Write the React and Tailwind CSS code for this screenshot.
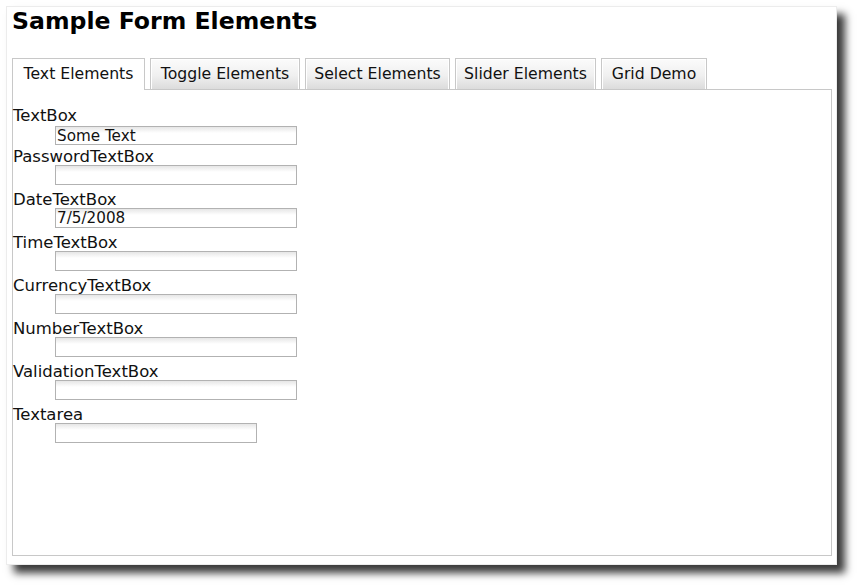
const tabs = [
  { label: "Text Elements", w: "w-[133px]", active: true },
  { label: "Toggle Elements", w: "w-[150px]" },
  { label: "Select Elements", w: "w-[145px]" },
  { label: "Slider Elements", w: "w-[141px]" },
  { label: "Grid Demo", w: "w-[106px]" },
];

const fields = [
  { label: "TextBox", value: "Some Text" },
  { label: "PasswordTextBox", type: "password" },
  { label: "DateTextBox", value: "7/5/2008" },
  { label: "TimeTextBox" },
  { label: "CurrencyTextBox" },
  { label: "NumberTextBox" },
  { label: "ValidationTextBox" },
  { label: "Textarea", narrow: true },
];

function Field({ f, first }) {
  return (
    <div className={first ? "mb-[4px]" : "mb-[7px]"}>
      <div className="text-[16.5px] leading-[16px] text-[#111]">{f.label}</div>
      <input
        type={f.type || "text"}
        defaultValue={f.value || ""}
        className={`ml-[42px] block border border-[#b2b2b2] bg-[linear-gradient(to_bottom,#e6e6e6,#ffffff_6px)] px-[1px] text-[15.2px] leading-[18px] text-[#111] outline-none ${
          f.narrow ? "w-[202px]" : "w-[242px]"
        } ${first ? "mt-[2px] h-[19px]" : "h-[20px]"}`}
      />
    </div>
  );
}

export default function App() {
  return (
    <div className="w-[860px] h-[588px] bg-white pt-[6px] pl-[6px] font-['DejaVu_Sans',sans-serif]">
      <div className="w-[831px] h-[559px] bg-white border border-[#ececec] shadow-[8px_8px_8px_rgba(0,0,0,0.78)]">
        <h1 className="pl-[5px] text-[23.6px] leading-[28px] font-bold text-black">
          Sample Form Elements
        </h1>

        <div className="ml-[5px] mt-[23px] w-[820px]">
          <div className="relative z-10 flex items-start gap-[5px] h-[31px]">
            {tabs.map((t) =>
              t.active ? (
                <div
                  key={t.label}
                  className={`${t.w} h-[32px] border border-b-0 border-[#c8c8c8] bg-white pt-[6px] text-center text-[15.7px] leading-[18px] text-[#111]`}
                >
                  {t.label}
                </div>
              ) : (
                <div
                  key={t.label}
                  className={`${t.w} h-[31px] border border-b-0 border-[#c8c8c8] bg-[linear-gradient(to_bottom,#fbfbfb,#f0f0f0_55%,#dcdcdc)] shadow-[inset_1px_1px_0_#fff,inset_-1px_0_0_#fff] pt-[6px] text-center text-[15.7px] leading-[18px] text-[#111]`}
                >
                  {t.label}
                </div>
              )
            )}
          </div>

          <div className="h-[467px] border border-[#c8c8c8] bg-white pt-[18px]">
            {fields.map((f, i) => (
              <Field key={f.label} f={f} first={i === 0} />
            ))}
          </div>
        </div>
      </div>
    </div>
  );
}
